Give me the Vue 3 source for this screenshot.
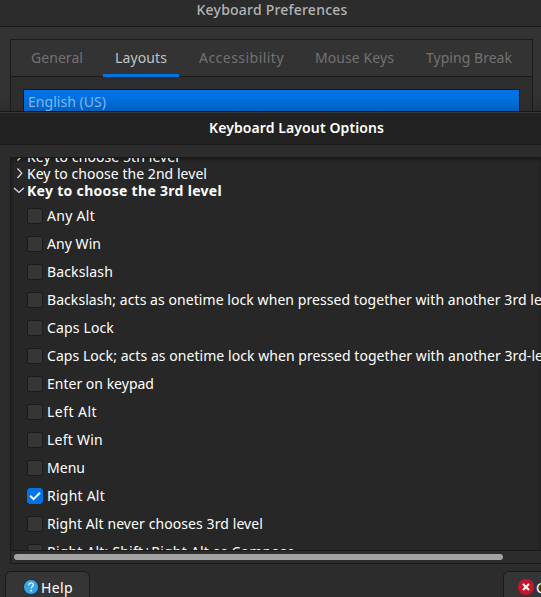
<script setup>
const tabs = [
  { label: 'General', width: 52 },
  { label: 'Layouts', width: 52, active: true },
  { label: 'Accessibility', width: 85 },
  { label: 'Mouse Keys', width: 79 },
  { label: 'Typing Break', width: 86 },
]

const options = [
  { label: 'Any Alt', width: 48 },
  { label: 'Any Win', width: 54 },
  { label: 'Backslash', width: 66 },
  { label: 'Backslash; acts as onetime lock when pressed together with another 3rd le', width: 495 },
  { label: 'Caps Lock', width: 67 },
  { label: 'Caps Lock; acts as onetime lock when pressed together with another 3rd-le', width: 496 },
  { label: 'Enter on keypad', width: 107 },
  { label: 'Left Alt', width: 50 },
  { label: 'Left Win', width: 56 },
  { label: 'Menu', width: 38 },
  { label: 'Right Alt', width: 58, checked: true },
  { label: 'Right Alt never chooses 3rd level', width: 216 },
  { label: 'Right Alt; Shift+Right Alt as Compose', width: 248 },
]

// Spreads the letters so that a label takes exactly the given width.
const vFit = {
  mounted(el, { value }) {
    const natural = el.getBoundingClientRect().width
    el.style.letterSpacing = `${(value - natural) / el.textContent.length}px`
  },
}
</script>

<template>
  <main class="screen">
    <section class="prefs">
      <header class="titlebar"><span v-fit="151">Keyboard Preferences</span></header>
      <div class="notebook">
        <nav class="tabs">
          <div v-for="tab in tabs" :key="tab.label" class="tab" :class="{ active: tab.active }">
            <span v-fit="tab.width">{{ tab.label }}</span>
          </div>
        </nav>
        <div class="page">
          <div class="layout-item"><span v-fit="78">English (US)</span></div>
        </div>
      </div>
    </section>

    <section class="dialog">
      <header class="dialog-title"><span v-fit="175">Keyboard Layout Options</span></header>
      <div class="dialog-body">
        <div class="frame">
          <div class="tree">
            <div class="group">
              <svg class="arrow" viewBox="0 0 14 17"><path d="M4.5 4.5 8.5 8.5 4.5 12.5" /></svg>
              <span v-fit="152">Key to choose 5th level</span>
            </div>
            <div class="group">
              <svg class="arrow" viewBox="0 0 14 17"><path d="M4.5 3.5 8.8 8.2 4.5 13" /></svg>
              <span v-fit="180">Key to choose the 2nd level</span>
            </div>
            <div class="group open">
              <svg class="arrow" viewBox="0 0 14 17"><path d="M4 6 8.9 10.5 13.8 6" /></svg>
              <span v-fit="195">Key to choose the 3rd level</span>
            </div>
            <div v-for="option in options" :key="option.label" class="option">
              <span class="check" :class="{ checked: option.checked }">
                <svg v-if="option.checked" viewBox="0 0 16 16"><path d="M3.2 7.8 6.6 11.2 13 4.8" /></svg>
              </span>
              <span v-fit="option.width">{{ option.label }}</span>
            </div>
          </div>
          <div class="scrollbar"><div class="thumb"></div></div>
        </div>
        <footer class="actions">
          <div class="button">
            <svg class="icon" viewBox="0 0 16 16">
              <circle cx="8" cy="8" r="7.5" fill="#35a5e8" stroke="#14202a" stroke-width=".7" />
              <path d="M5.8 6.2C5.8 4.6 6.8 3.9 8.1 3.9S10.3 4.7 10.3 6C10.3 7.5 8.2 7.7 8.2 9.4" fill="none" stroke="#e8f6ff" stroke-width="1.4" />
              <circle cx="8.2" cy="11.7" r=".9" fill="#e8f6ff" />
            </svg>
            <span v-fit="32" class="caption">Help</span>
          </div>
          <div class="button cancel">
            <svg class="icon" viewBox="0 0 16 16">
              <circle cx="8" cy="8" r="8" fill="#c7162b" />
              <path d="M5 5 11 11M11 5 5 11" fill="none" stroke="#fff" stroke-width="2" />
            </svg>
            <span class="caption">Close</span>
          </div>
        </footer>
      </div>
    </section>
  </main>
</template>

<style>
body {
  background: #2d2d2d;
}
</style>

<style scoped>
.screen {
  width: 541px;
  height: 597px;
  overflow: hidden;
  color: #fff;
  font: 14px/20px "Noto Sans", "Open Sans", sans-serif;
  white-space: pre;
}
.screen * {
  box-sizing: border-box;
}
.prefs {
  height: 111px;
  overflow: hidden;
  background: linear-gradient(#333 0 95px, #2c2c2c 111px);
}
.titlebar {
  height: 27px;
  padding-left: 3px;
  border-bottom: 1px solid #191919;
  background: #2c2c2c;
  color: #b4b4b4;
  font-weight: 500;
  text-align: center;
}
.notebook {
  width: 523px;
  height: 90px;
  margin: 12px 0 0 10px;
  border: 1px solid #1b1b1b;
  background: #2d2d2d;
}
.tabs {
  display: flex;
  height: 37px;
  padding-left: 8px;
  border-bottom: 1px solid #1b1b1b;
  background: #333;
}
.tab {
  flex: none;
  height: 37px;
  margin-right: 8px;
  padding: 8px 12px 0;
  border-bottom: 3px solid transparent;
  color: #727272;
}
.tab:nth-child(3) {
  margin-right: 7px;
}
.tab.active {
  border-color: #0073e5;
  color: #c2c2c2;
}
.page {
  padding: 12px;
}
.layout-item {
  height: 40px;
  padding: 2px 0 0 4px;
  border: 1px solid #191919;
  background: linear-gradient(#0073e5 0, #0070df 9px, #0060bd 22px);
  color: #83b5ec;
}
.dialog {
  height: 486px;
  border-top: 1px solid #151515;
}
.dialog-title {
  height: 32px;
  padding: 5px 0 0 52px;
  border-top: 1px solid #383838;
  background: #222;
  font-weight: 600;
  text-align: center;
}
.dialog-body {
  height: 453px;
  border-top: 1px solid #191919;
  background: #2c2c2c;
  overflow: hidden;
}
.frame {
  height: 407px;
  margin: 12px 0 0 10px;
  border: 1px solid #191919;
  border-right: 0;
}
.tree {
  height: 392px;
  overflow: hidden;
  background: #272727;
  box-shadow: inset 0 2px 3px #1b1b1b;
}
.group {
  display: flex;
  align-items: center;
  height: 17px;
  padding-left: 2px;
}
.group:first-child {
  margin-top: -10px;
}
.group.open {
  font-weight: 700;
}
.arrow {
  width: 14px;
  height: 17px;
  flex: none;
  overflow: visible;
  fill: none;
  stroke: #e2e2e2;
  stroke-width: 1.2;
}
.group.open .arrow {
  margin-left: -3px;
  margin-right: 3px;
}
.option {
  display: flex;
  align-items: center;
  height: 28px;
  padding-left: 16px;
}
.group.open + .option {
  margin-top: 3px;
}
.check {
  flex: none;
  width: 16px;
  height: 16px;
  margin-right: 4px;
  border: 1px solid #1a1a1a;
  border-radius: 3px;
  background: #363636;
}
.check.checked {
  border-color: #0073e5;
  background: #0073e5;
}
.check svg {
  display: block;
  width: 16px;
  height: 16px;
  margin: -1px;
  fill: none;
  stroke: #fff;
  stroke-width: 2;
}
.scrollbar {
  height: 13px;
  padding: 3px 0 0 3px;
  border-top: 1px solid #191919;
}
.thumb {
  width: 489px;
  height: 6px;
  border-radius: 3px;
  background: #a3a3a3;
}
.actions {
  display: flex;
  justify-content: space-between;
  padding: 7px 0 0 5px;
}
.button {
  display: flex;
  gap: 2px;
  width: 85px;
  height: 34px;
  padding: 7px 0 0 17px;
  border: 1px solid #191919;
  border-radius: 6px;
  background: #353535;
}
.button.cancel {
  flex: none;
  padding-left: 14px;
  margin-right: -47px;
}
.icon {
  flex: none;
  width: 16px;
  height: 16px;
}
.caption {
  margin-top: -1px;
}
</style>
